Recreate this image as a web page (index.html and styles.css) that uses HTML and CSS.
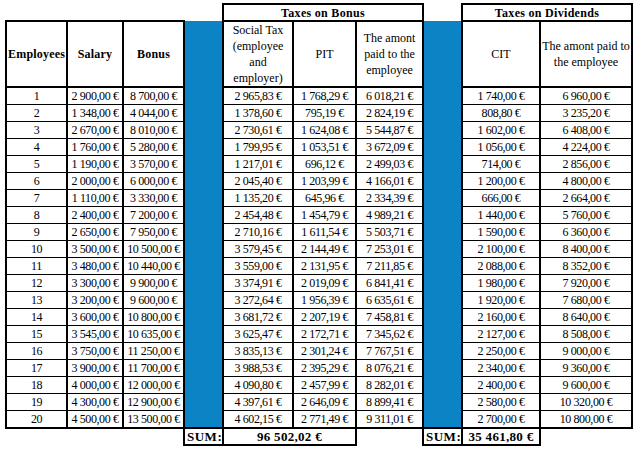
FILE: index.html
```html
<!DOCTYPE html>
<html>
<head>
<meta charset="utf-8">
<link rel="stylesheet" href="styles.css">
</head>
<body>
<table class="sheet">
<colgroup>
<col class="c-emp"><col class="c-sal"><col class="c-bon"><col class="c-gap"><col class="c-soc"><col class="c-pit"><col class="c-amt"><col class="c-gap"><col class="c-cit"><col class="c-amt2">
</colgroup>
<tr class="h1">
<td colspan="4" class="blank"></td>
<th colspan="3" class="grp">Taxes on Bonus</th>
<td class="blank"></td>
<th colspan="2" class="grp">Taxes on Dividends</th>
</tr>
<tr class="h2">
<th class="b">Employees</th><th class="b">Salary</th><th class="b">Bonus</th><td class="gap"></td>
<th>Social Tax (employee and employer)</th><th>PIT</th><th>The amont paid to the employee</th><td class="gap"></td>
<th>CIT</th><th>The amont paid to the employee</th>
</tr>
<tr><td>1</td><td>2 900,00 €</td><td>8 700,00 €</td><td class="gap"></td><td>2 965,83 €</td><td>1 768,29 €</td><td>6 018,21 €</td><td class="gap"></td><td>1 740,00 €</td><td>6 960,00 €</td></tr>
<tr><td>2</td><td>1 348,00 €</td><td>4 044,00 €</td><td class="gap"></td><td>1 378,60 €</td><td>795,19 €</td><td>2 824,19 €</td><td class="gap"></td><td>808,80 €</td><td>3 235,20 €</td></tr>
<tr><td>3</td><td>2 670,00 €</td><td>8 010,00 €</td><td class="gap"></td><td>2 730,61 €</td><td>1 624,08 €</td><td>5 544,87 €</td><td class="gap"></td><td>1 602,00 €</td><td>6 408,00 €</td></tr>
<tr><td>4</td><td>1 760,00 €</td><td>5 280,00 €</td><td class="gap"></td><td>1 799,95 €</td><td>1 053,51 €</td><td>3 672,09 €</td><td class="gap"></td><td>1 056,00 €</td><td>4 224,00 €</td></tr>
<tr><td>5</td><td>1 190,00 €</td><td>3 570,00 €</td><td class="gap"></td><td>1 217,01 €</td><td>696,12 €</td><td>2 499,03 €</td><td class="gap"></td><td>714,00 €</td><td>2 856,00 €</td></tr>
<tr><td>6</td><td>2 000,00 €</td><td>6 000,00 €</td><td class="gap"></td><td>2 045,40 €</td><td>1 203,99 €</td><td>4 166,01 €</td><td class="gap"></td><td>1 200,00 €</td><td>4 800,00 €</td></tr>
<tr><td>7</td><td>1 110,00 €</td><td>3 330,00 €</td><td class="gap"></td><td>1 135,20 €</td><td>645,96 €</td><td>2 334,39 €</td><td class="gap"></td><td>666,00 €</td><td>2 664,00 €</td></tr>
<tr><td>8</td><td>2 400,00 €</td><td>7 200,00 €</td><td class="gap"></td><td>2 454,48 €</td><td>1 454,79 €</td><td>4 989,21 €</td><td class="gap"></td><td>1 440,00 €</td><td>5 760,00 €</td></tr>
<tr><td>9</td><td>2 650,00 €</td><td>7 950,00 €</td><td class="gap"></td><td>2 710,16 €</td><td>1 611,54 €</td><td>5 503,71 €</td><td class="gap"></td><td>1 590,00 €</td><td>6 360,00 €</td></tr>
<tr><td>10</td><td>3 500,00 €</td><td>10 500,00 €</td><td class="gap"></td><td>3 579,45 €</td><td>2 144,49 €</td><td>7 253,01 €</td><td class="gap"></td><td>2 100,00 €</td><td>8 400,00 €</td></tr>
<tr><td>11</td><td>3 480,00 €</td><td>10 440,00 €</td><td class="gap"></td><td>3 559,00 €</td><td>2 131,95 €</td><td>7 211,85 €</td><td class="gap"></td><td>2 088,00 €</td><td>8 352,00 €</td></tr>
<tr><td>12</td><td>3 300,00 €</td><td>9 900,00 €</td><td class="gap"></td><td>3 374,91 €</td><td>2 019,09 €</td><td>6 841,41 €</td><td class="gap"></td><td>1 980,00 €</td><td>7 920,00 €</td></tr>
<tr><td>13</td><td>3 200,00 €</td><td>9 600,00 €</td><td class="gap"></td><td>3 272,64 €</td><td>1 956,39 €</td><td>6 635,61 €</td><td class="gap"></td><td>1 920,00 €</td><td>7 680,00 €</td></tr>
<tr><td>14</td><td>3 600,00 €</td><td>10 800,00 €</td><td class="gap"></td><td>3 681,72 €</td><td>2 207,19 €</td><td>7 458,81 €</td><td class="gap"></td><td>2 160,00 €</td><td>8 640,00 €</td></tr>
<tr><td>15</td><td>3 545,00 €</td><td>10 635,00 €</td><td class="gap"></td><td>3 625,47 €</td><td>2 172,71 €</td><td>7 345,62 €</td><td class="gap"></td><td>2 127,00 €</td><td>8 508,00 €</td></tr>
<tr><td>16</td><td>3 750,00 €</td><td>11 250,00 €</td><td class="gap"></td><td>3 835,13 €</td><td>2 301,24 €</td><td>7 767,51 €</td><td class="gap"></td><td>2 250,00 €</td><td>9 000,00 €</td></tr>
<tr><td>17</td><td>3 900,00 €</td><td>11 700,00 €</td><td class="gap"></td><td>3 988,53 €</td><td>2 395,29 €</td><td>8 076,21 €</td><td class="gap"></td><td>2 340,00 €</td><td>9 360,00 €</td></tr>
<tr><td>18</td><td>4 000,00 €</td><td>12 000,00 €</td><td class="gap"></td><td>4 090,80 €</td><td>2 457,99 €</td><td>8 282,01 €</td><td class="gap"></td><td>2 400,00 €</td><td>9 600,00 €</td></tr>
<tr><td>19</td><td>4 300,00 €</td><td>12 900,00 €</td><td class="gap"></td><td>4 397,61 €</td><td>2 646,09 €</td><td>8 899,41 €</td><td class="gap"></td><td>2 580,00 €</td><td>10 320,00 €</td></tr>
<tr class="last"><td>20</td><td>4 500,00 €</td><td>13 500,00 €</td><td class="gap"></td><td>4 602,15 €</td><td>2 771,49 €</td><td>9 311,01 €</td><td class="gap"></td><td>2 700,00 €</td><td>10 800,00 €</td></tr>
<tr class="sum">
<td colspan="3" class="blank"></td>
<td class="lbl">SUM:</td>
<td colspan="2" class="tot">96 502,02 €</td>
<td class="blank"></td>
<td class="lbl">SUM:</td>
<td class="tot">35 461,80 €</td>
<td class="blank"></td>
</tr>
</table>
</body>
</html>
```
FILE: styles.css
```css
html, body {
  margin: 0;
  padding: 0;
  background: #ffffff;
}
body {
  padding: 3px 0 0 5px;
  font-family: "Liberation Serif", "Times New Roman", serif;
  font-size: 12px;
  color: #000;
}
.sheet {
  border-collapse: collapse;
  table-layout: fixed;
  width: 627px;
}
.c-emp { width: 61px; }
.c-sal { width: 56px; }
.c-bon { width: 61px; }
.c-gap { width: 39px; }
.c-soc { width: 70px; }
.c-pit { width: 63px; }
.c-amt { width: 67px; }
.c-cit { width: 78px; }
.c-amt2 { width: 92px; }

.sheet td, .sheet th {
  padding: 0 1px;
  text-align: center;
  vertical-align: middle;
  border-left: 2px solid #000;
  border-right: 2px solid #000;
  border-top: 1px solid #000;
  border-bottom: 1px solid #000;
  white-space: nowrap;
  line-height: 14px;
  height: 16px;
  font-weight: normal;
  overflow: hidden;
}
.sheet td {
  letter-spacing: -0.4px;
}
.sheet th {
  white-space: normal;
  border: 2px solid #000;
  line-height: 16px;
}
.h1 th.grp {
  font-weight: bold;
  height: 15px;
  line-height: 14px;
  letter-spacing: 0.3px;
}
.h2 th { height: 64px; }
.h2 th.b {
  font-weight: bold;
  letter-spacing: 0.2px;
}
.sheet td.blank {
  border: none;
}
.sheet td.gap {
  background: #0b83c4;
  border-top: none;
  border-bottom: none;
}
.last td { border-bottom: 2px solid #000; }
.sum td {
  height: 15px;
}
.sum td.lbl, .sum td.tot {
  border: 2px solid #000;
  font-weight: bold;
  font-size: 13px;
}
.sum td.lbl {
  text-align: left;
  padding-left: 2px;
  letter-spacing: 0.5px;
}
.sum td.tot {
  letter-spacing: 0.3px;
}
```
